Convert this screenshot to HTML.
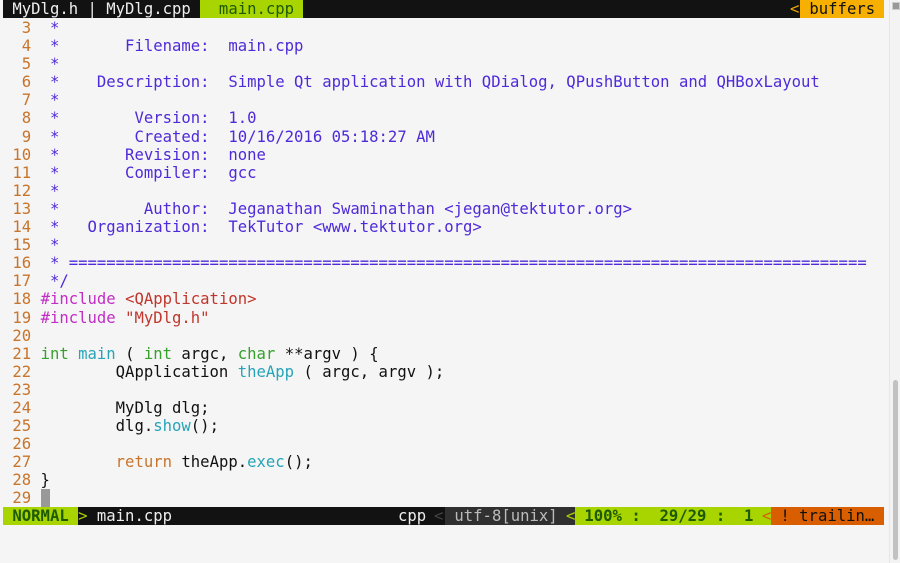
<!DOCTYPE html>
<html><head><style>
html,body{margin:0;padding:0;background:#f5f5f5;width:900px;height:563px;overflow:hidden}
.t{position:absolute;left:3px;width:881px;font-family:"DejaVu Sans Mono","Liberation Mono",monospace;font-size:15.6px;line-height:18.1px;white-space:pre;color:#111}
.code{white-space:normal}
.r{height:18.1px;white-space:pre}
.n{color:#c8742a}.c{color:#4f2ad8}.p{color:#c02ec4}.s{color:#c0362c}.g{color:#36a02c}.y{color:#26a4b8}.o{color:#c8742a}
.abs{position:absolute;top:0;height:18px;line-height:18px}
</style></head><body>
<div class="t" style="top:0;height:18px;background:#121212;color:#eee;line-height:18px"><span> MyDlg.h | MyDlg.cpp </span><span style="background:#a8d400;color:#1d5a00">  main.cpp </span><span class="abs" style="left:787px;color:#f0a800">&lt;</span><span class="abs" style="left:797px;width:84px;background:#f8b000;color:#111"> buffers</span></div>
<div class="t code" style="top:19px">
<div class="r"><span class="n">  3</span> <span class="c"> *</span></div>
<div class="r"><span class="n">  4</span> <span class="c"> *       Filename:  main.cpp</span></div>
<div class="r"><span class="n">  5</span> <span class="c"> *</span></div>
<div class="r"><span class="n">  6</span> <span class="c"> *    Description:  Simple Qt application with QDialog, QPushButton and QHBoxLayout</span></div>
<div class="r"><span class="n">  7</span> <span class="c"> *</span></div>
<div class="r"><span class="n">  8</span> <span class="c"> *        Version:  1.0</span></div>
<div class="r"><span class="n">  9</span> <span class="c"> *        Created:  10/16/2016 05:18:27 AM</span></div>
<div class="r"><span class="n"> 10</span> <span class="c"> *       Revision:  none</span></div>
<div class="r"><span class="n"> 11</span> <span class="c"> *       Compiler:  gcc</span></div>
<div class="r"><span class="n"> 12</span> <span class="c"> *</span></div>
<div class="r"><span class="n"> 13</span> <span class="c"> *         Author:  Jeganathan Swaminathan &lt;jegan@tektutor.org&gt;</span></div>
<div class="r"><span class="n"> 14</span> <span class="c"> *   Organization:  TekTutor &lt;www.tektutor.org&gt;</span></div>
<div class="r"><span class="n"> 15</span> <span class="c"> *</span></div>
<div class="r"><span class="n"> 16</span> <span class="c"> * =====================================================================================</span></div>
<div class="r"><span class="n"> 17</span> <span class="c"> */</span></div>
<div class="r"><span class="n"> 18</span> <span class="p">#include</span> <span class="s">&lt;QApplication&gt;</span></div>
<div class="r"><span class="n"> 19</span> <span class="p">#include</span> <span class="s">"MyDlg.h"</span></div>
<div class="r"><span class="n"> 20</span></div>
<div class="r"><span class="n"> 21</span> <span class="g">int</span> <span class="y">main</span> ( <span class="g">int</span> argc, <span class="g">char</span> **argv ) {</div>
<div class="r"><span class="n"> 22</span>         QApplication <span class="y">theApp</span> ( argc, argv );</div>
<div class="r"><span class="n"> 23</span></div>
<div class="r"><span class="n"> 24</span>         MyDlg dlg;</div>
<div class="r"><span class="n"> 25</span>         dlg.<span class="y">show</span>();</div>
<div class="r"><span class="n"> 26</span></div>
<div class="r"><span class="n"> 27</span>         <span class="o">return</span> theApp.<span class="y">exec</span>();</div>
<div class="r"><span class="n"> 28</span> }</div>
<div class="r"><span class="n"> 29</span> <span style="background:#999"> </span></div>
</div>
<div class="t" style="top:507px;height:18px;background:#121212;color:#eee;line-height:18px"><span style="background:#a8d400;color:#1d5a00;font-weight:bold"> NORMAL </span><span style="color:#a8d400">&gt;</span> main.cpp<span class="abs" style="left:395px">cpp</span><span class="abs" style="left:431px;color:#444">&lt;</span><span class="abs" style="left:442px;width:130px;background:#303030;color:#bbb"> utf-8[unix] </span><span class="abs" style="left:563px;color:#a8d400;background:#303030">&lt;</span><span class="abs" style="left:572px;width:196px;background:#a8d400;color:#1d5a00;font-weight:bold"> 100% :  29/29 :  1 </span><span class="abs" style="left:759px;color:#d85e00;background:#a8d400">&lt;</span><span class="abs" style="left:768px;width:113px;background:#d85e00;color:#111"> ! trailin…</span></div>
<div style="position:absolute;left:889px;top:0;width:11px;height:563px;background:#f3f3f3;border-left:1px solid #e6e6e6"></div>
<div style="position:absolute;left:892px;top:2px;width:6px;height:6px;background:#999;border:1px solid #ccc"></div>
<div style="position:absolute;left:893px;top:380px;width:5px;height:180px;background:#c2c2c2;border-radius:3px"></div>
</body></html>
